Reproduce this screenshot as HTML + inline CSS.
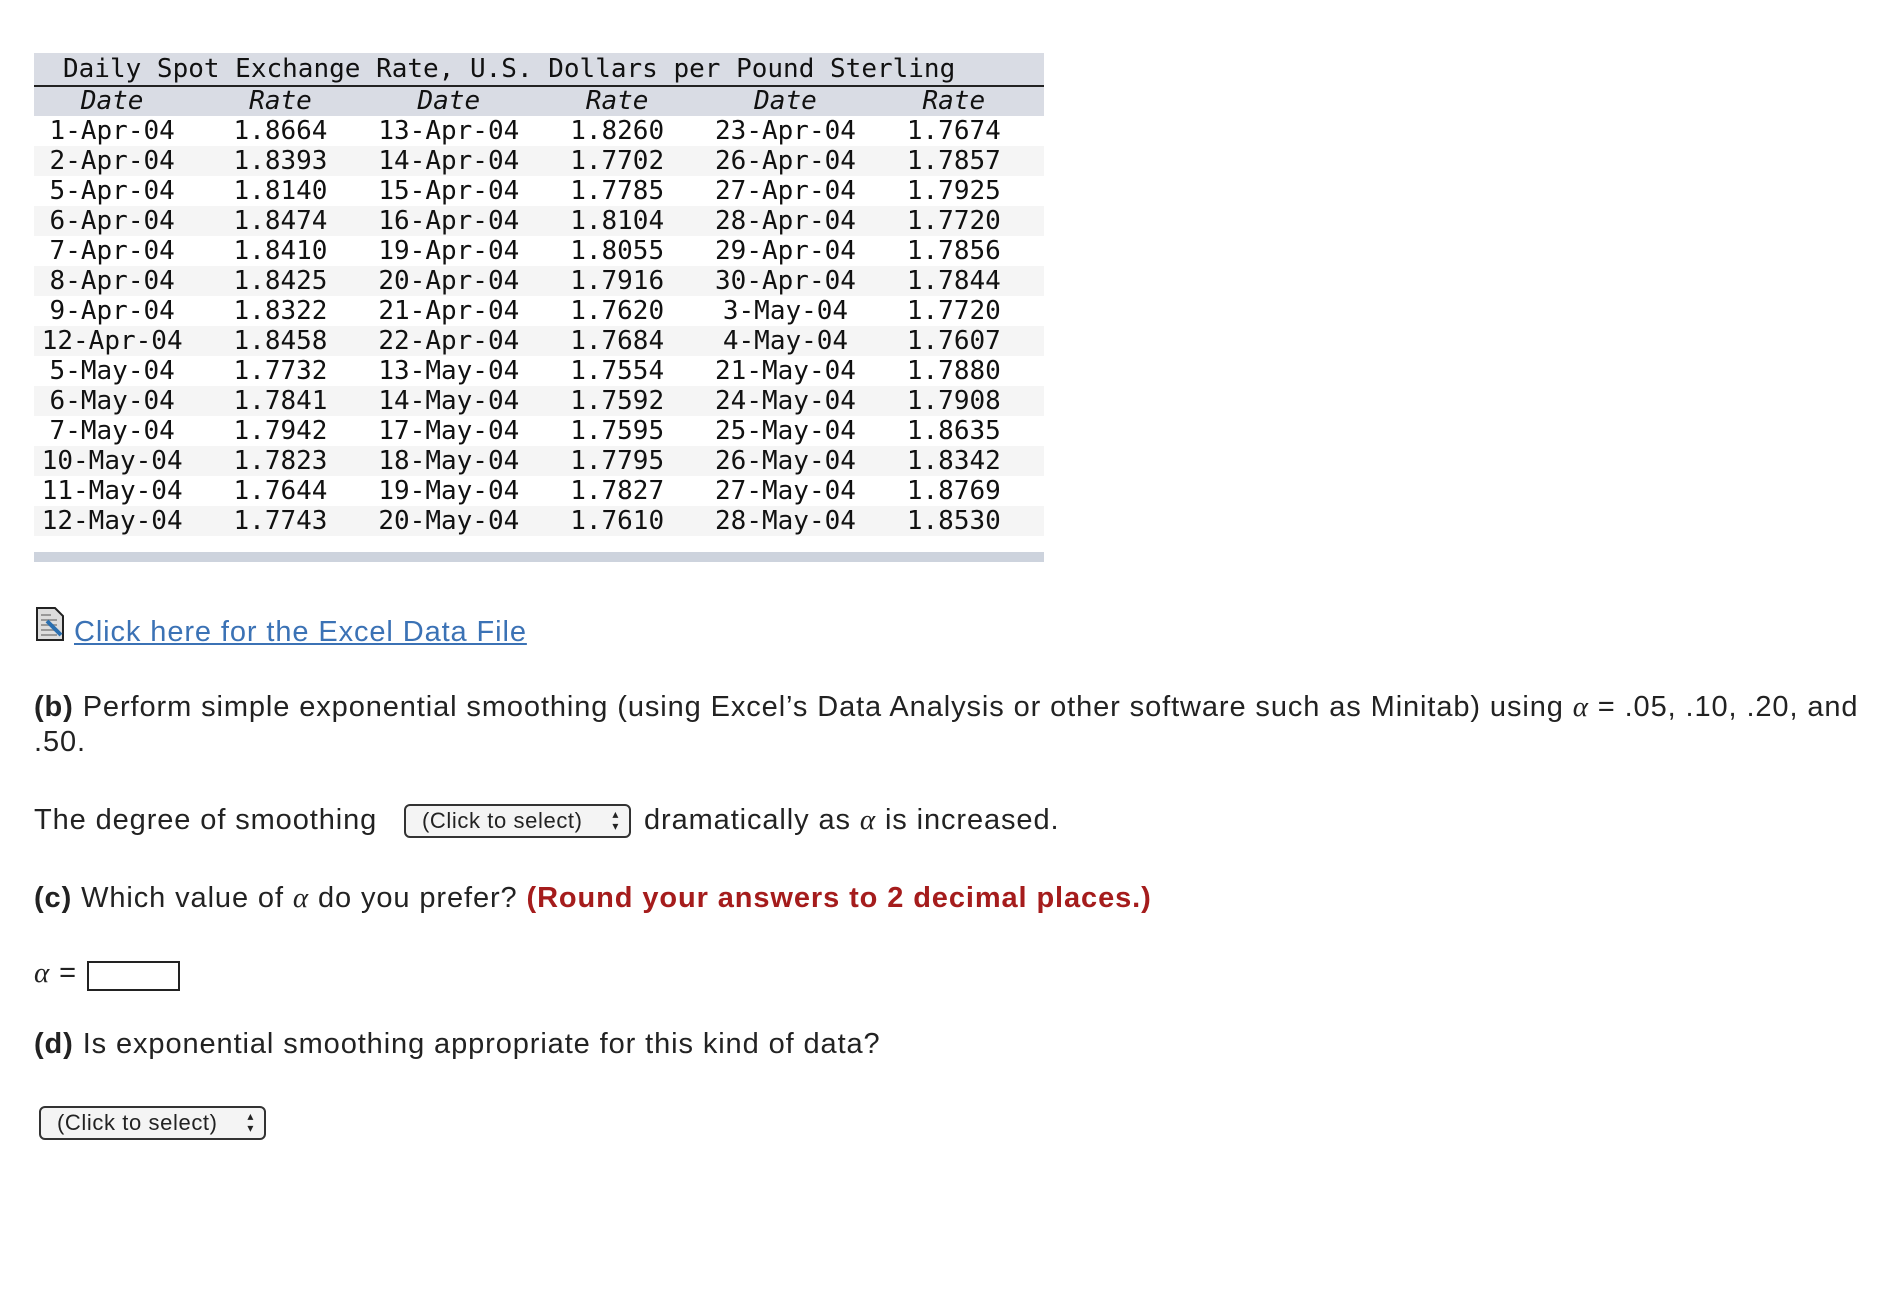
<!DOCTYPE html>
<html><head><meta charset="utf-8"><style>
body{margin:0;width:1892px;height:1306px;background:#fff;position:relative;overflow:hidden;font-family:"Liberation Sans",sans-serif;color:#222}
.t{position:absolute;left:34px;top:53px;width:1010px;font-family:"DejaVu Sans Mono","Liberation Mono",monospace;font-size:26px;color:#111}
table{border-collapse:collapse;width:1010px;table-layout:fixed}
td,th{padding:0 12px 0 0;text-align:center;height:30px;line-height:29px;font-weight:normal}
.title{background:#d9dce4;height:31px;text-align:left;padding-left:29px;border-bottom:2px solid #222;line-height:32px}
.hd th{background:#d9dce4;font-style:italic;height:29px}
tr.s td{background:#f5f5f5}
.bar{position:absolute;left:34px;top:552px;width:1010px;height:10px;background:#cdd3dd}
.x{position:absolute;left:34px;white-space:nowrap;font-size:29px;line-height:36px;letter-spacing:0.9px}
.sel{position:absolute;border:2px solid #333;border-radius:6px;background:#f4f4f4;font-size:22px;box-sizing:border-box;padding-left:16px;line-height:30px;letter-spacing:0.6px}
.sel:after{content:"\25B4\A\25BE";white-space:pre;position:absolute;right:10px;top:2px;font-size:12px;line-height:12px}
i.a{font-family:"Liberation Serif",serif;font-style:italic}
</style></head><body>
<div class="t"><table>
<tr><td colspan="6" class="title">Daily Spot Exchange Rate, U.S. Dollars per Pound Sterling</td></tr>
<tr class="hd"><th>Date</th><th>Rate</th><th>Date</th><th>Rate</th><th>Date</th><th>Rate</th></tr>
<tr><td>1-Apr-04</td><td>1.8664</td><td>13-Apr-04</td><td>1.8260</td><td>23-Apr-04</td><td>1.7674</td></tr>
<tr class="s"><td>2-Apr-04</td><td>1.8393</td><td>14-Apr-04</td><td>1.7702</td><td>26-Apr-04</td><td>1.7857</td></tr>
<tr><td>5-Apr-04</td><td>1.8140</td><td>15-Apr-04</td><td>1.7785</td><td>27-Apr-04</td><td>1.7925</td></tr>
<tr class="s"><td>6-Apr-04</td><td>1.8474</td><td>16-Apr-04</td><td>1.8104</td><td>28-Apr-04</td><td>1.7720</td></tr>
<tr><td>7-Apr-04</td><td>1.8410</td><td>19-Apr-04</td><td>1.8055</td><td>29-Apr-04</td><td>1.7856</td></tr>
<tr class="s"><td>8-Apr-04</td><td>1.8425</td><td>20-Apr-04</td><td>1.7916</td><td>30-Apr-04</td><td>1.7844</td></tr>
<tr><td>9-Apr-04</td><td>1.8322</td><td>21-Apr-04</td><td>1.7620</td><td>3-May-04</td><td>1.7720</td></tr>
<tr class="s"><td>12-Apr-04</td><td>1.8458</td><td>22-Apr-04</td><td>1.7684</td><td>4-May-04</td><td>1.7607</td></tr>
<tr><td>5-May-04</td><td>1.7732</td><td>13-May-04</td><td>1.7554</td><td>21-May-04</td><td>1.7880</td></tr>
<tr class="s"><td>6-May-04</td><td>1.7841</td><td>14-May-04</td><td>1.7592</td><td>24-May-04</td><td>1.7908</td></tr>
<tr><td>7-May-04</td><td>1.7942</td><td>17-May-04</td><td>1.7595</td><td>25-May-04</td><td>1.8635</td></tr>
<tr class="s"><td>10-May-04</td><td>1.7823</td><td>18-May-04</td><td>1.7795</td><td>26-May-04</td><td>1.8342</td></tr>
<tr><td>11-May-04</td><td>1.7644</td><td>19-May-04</td><td>1.7827</td><td>27-May-04</td><td>1.8769</td></tr>
<tr class="s"><td>12-May-04</td><td>1.7743</td><td>20-May-04</td><td>1.7610</td><td>28-May-04</td><td>1.8530</td></tr>
</table></div>
<div class="bar"></div>
<svg style="position:absolute;left:35px;top:607px" width="32" height="34" viewBox="0 0 32 34"><path d="M2 1h18l8 8v24H2z" fill="#ddd" stroke="#222" stroke-width="2"/><path d="M6 8h10M6 13h16M6 18h16M6 23h16M6 28h16" stroke="#999" stroke-width="2"/><path d="M12 14l14 14" stroke="#2a6fb0" stroke-width="4"/></svg>
<div class="x" style="top:614px;left:74px;color:#3b72b5;text-decoration:underline">Click here for the Excel Data File</div>
<div class="x" style="top:689px"><b>(b)</b> Perform simple exponential smoothing (using Excel’s Data Analysis or other software such as Minitab) using <i class="a">α</i> = .05, .10, .20, and</div>
<div class="x" style="top:724px">.50.</div>
<div class="x" style="top:802px">The degree of smoothing</div>
<div class="sel" style="left:404px;top:804px;width:227px;height:34px">(Click to select)</div>
<div class="x" style="top:802px;left:644px">dramatically as <i class="a">α</i> is increased.</div>
<div class="x" style="top:880px"><b>(c)</b> Which value of <i class="a">α</i> do you prefer? <b style="color:#a51c1c">(Round your answers to 2 decimal places.)</b></div>
<div class="x" style="top:955px"><i class="a">α</i> =</div>
<div style="position:absolute;left:87px;top:961px;width:93px;height:30px;border:2px solid #222;box-sizing:border-box"></div>
<div class="x" style="top:1026px"><b>(d)</b> Is exponential smoothing appropriate for this kind of data?</div>
<div class="sel" style="left:39px;top:1106px;width:227px;height:34px">(Click to select)</div>
</body></html>
